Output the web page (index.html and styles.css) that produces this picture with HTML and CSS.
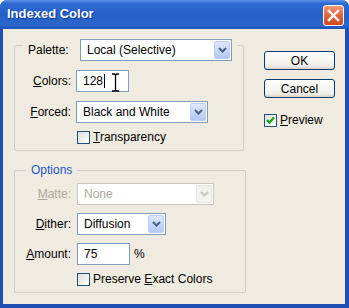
FILE: index.html
```html
<!DOCTYPE html>
<html lang="en">
<head>
    <meta charset="UTF-8">
    <title>Indexed Color</title>
    <link rel="stylesheet" href="styles.css">
</head>
<body>
    <div class="window">
        <div class="titlebar">
            <span class="title">Indexed Color</span>
            <span class="close">
                <svg width="13" height="13" viewBox="0 0 13 13"><path d="M2 2 L11 11 M11 2 L2 11" stroke="#fff" stroke-width="2.4" stroke-linecap="square"/></svg>
            </span>
        </div>
        <div class="body">
            <div class="main">
                <div class="group group-palette">
                    <div class="group-head">
                        <span class="head-label">Palette:</span>
                        <div class="combo combo-palette">
                            <span class="value">Local (Selective)</span>
                            <span class="drop"><svg width="9" height="6" viewBox="0 0 9 6"><path d="M1 1 L4.5 4.5 L8 1" fill="none" stroke="#4d6185" stroke-width="2"/></svg></span>
                        </div>
                    </div>
                    <div class="row first">
                        <span class="lbl"><u>C</u>olors:</span>
                        <div class="field field-colors">
                            <span class="value">128</span><span class="caret"></span>
                            <svg class="ibeam" width="9" height="19" viewBox="0 0 9 19"><path d="M1 1 H3.5 L4.5 2 L5.5 1 H8 M4.5 2 V17 M1 18 H3.5 L4.5 17 L5.5 18 H8" fill="none" stroke="#000" stroke-width="1.3"/></svg>
                        </div>
                    </div>
                    <div class="row">
                        <span class="lbl"><u>F</u>orced:</span>
                        <div class="combo combo-forced">
                            <span class="value">Black and White</span>
                            <span class="drop"><svg width="9" height="6" viewBox="0 0 9 6"><path d="M1 1 L4.5 4.5 L8 1" fill="none" stroke="#4d6185" stroke-width="2"/></svg></span>
                        </div>
                    </div>
                    <div class="check-row">
                        <span class="box"></span>
                        <span><u>T</u>ransparency</span>
                    </div>
                </div>

                <div class="group group-options">
                    <div class="legend">Options</div>
                    <div class="row matte">
                        <span class="lbl disabled"><u>M</u>atte:</span>
                        <div class="combo combo-matte disabled">
                            <span class="value">None</span>
                            <span class="drop"><svg width="9" height="6" viewBox="0 0 9 6"><path d="M1 1 L4.5 4.5 L8 1" fill="none" stroke="#c9c7ba" stroke-width="2"/></svg></span>
                        </div>
                    </div>
                    <div class="row">
                        <span class="lbl"><u>D</u>ither:</span>
                        <div class="combo combo-dither">
                            <span class="value">Diffusion</span>
                            <span class="drop"><svg width="9" height="6" viewBox="0 0 9 6"><path d="M1 1 L4.5 4.5 L8 1" fill="none" stroke="#4d6185" stroke-width="2"/></svg></span>
                        </div>
                    </div>
                    <div class="row">
                        <span class="lbl"><u>A</u>mount:</span>
                        <div class="field field-amount"><span class="value">75</span></div>
                        <span class="unit">%</span>
                    </div>
                    <div class="check-row">
                        <span class="box"></span>
                        <span>Preserve <u>E</u>xact Colors</span>
                    </div>
                </div>
            </div>

            <div class="side">
                <button class="btn">OK</button>
                <button class="btn">Cancel</button>
                <div class="check-row preview">
                    <span class="box">
                        <svg width="11" height="11" viewBox="0 0 11 11"><path d="M2 5 L4.5 7.5 L9 2.5" fill="none" stroke="#21a121" stroke-width="2.4"/></svg>
                    </span>
                    <span><u>P</u>review</span>
                </div>
            </div>
        </div>
    </div>
</body>
</html>
```

FILE: styles.css
```css
body {
    margin: 0;
    background: #ffffff;
    font-family: "Liberation Sans", Arial, sans-serif;
    font-size: 12px;
    color: #000;
}
.window {
    width: 349px;
    height: 308px;
    display: flex;
    flex-direction: column;
    background: #1f4fb3;
    border-radius: 7px 7px 0 0;
    overflow: hidden;
}
.titlebar {
    height: 29px;
    flex: none;
    display: flex;
    align-items: center;
    justify-content: space-between;
    padding: 0 5px 0 7px;
    background: linear-gradient(to bottom, #5b93e6 0%, #2f6ad3 12%, #2660c8 50%, #2a66cc 85%, #1e55bb 100%);
}
.title {
    color: #fff;
    font-weight: bold;
    font-size: 13px;
    text-shadow: 1px 1px 0 #0b3b98;
    margin-top: -2px;
}
.close {
    width: 19px;
    height: 19px;
    border: 1px solid #fff;
    border-radius: 3px;
    background: linear-gradient(to bottom, #f19a7b, #e2643c 50%, #cc4a22);
    display: flex;
    align-items: center;
    justify-content: center;
    margin-top: 2px;
}
.body {
    flex: 1;
    margin: 0 4px 4px 3px;
    background: #efebe0;
    display: flex;
}
.main {
    padding: 16px 0 0 11px;
}
.group {
    border: 1px solid #d0d0bf;
    border-radius: 2px;
}
.group-palette {
    width: 230px;
    box-sizing: border-box;
    padding-bottom: 6px;
}
.group-options {
    width: 232px;
    box-sizing: border-box;
    margin-top: 19px;
    padding-bottom: 6px;
}
.group-head {
    display: flex;
    align-items: center;
    width: fit-content;
    margin: -7px 0 0 8px;
    padding: 0 5px;
    background: #efebe0;
}
.head-label {
    width: 43px;
    margin-right: 9px;
}
.legend {
    width: fit-content;
    height: 14px;
    line-height: 14px;
    margin: -8px 0 0 11px;
    padding: 0 5px;
    background: #efebe0;
    color: #1f56cc;
}
.row {
    display: flex;
    align-items: center;
    margin-top: 8px;
}
.row.first {
    margin-top: 9px;
}
.group-palette .row {
    margin-top: 9px;
}
.row.matte {
    margin-top: 6px;
}
.lbl {
    width: 56px;
    margin-right: 5px;
    text-align: right;
}
.group-options .lbl {
    margin-right: 6px;
}
.lbl.disabled {
    color: #aca899;
}
.combo, .field {
    height: 22px;
    box-sizing: border-box;
    border: 1px solid #7f9db9;
    background: #fff;
    display: flex;
    align-items: center;
    position: relative;
}
.value {
    padding-left: 6px;
}
.combo .value {
    flex: 1;
}
.drop {
    width: 16px;
    align-self: stretch;
    margin: 1px;
    border-radius: 2px;
    border: 1px solid #bccdf5;
    box-sizing: border-box;
    background: linear-gradient(to bottom, #dfe8fd, #c2d4f8 60%, #b4c8f4);
    display: flex;
    align-items: center;
    justify-content: center;
}
.combo-palette { width: 152px; }
.combo-forced { width: 132px; }
.combo-matte { width: 137px; }
.combo-dither { width: 89px; }
.combo.disabled {
    border-color: #c9c7ba;
    color: #aca899;
}
.combo.disabled .drop {
    border-color: #e6e4dc;
    background: #f3f2ec;
}
.field-colors, .field-amount {
    width: 53px;
}
.caret {
    width: 1px;
    height: 14px;
    background: #000;
    margin-left: 1px;
}
.ibeam {
    position: absolute;
    left: 34px;
    top: 2px;
}
.unit {
    margin-left: 4px;
}
.check-row {
    display: flex;
    align-items: center;
    height: 14px;
    margin-top: 7px;
    padding-left: 62px;
}
.box {
    width: 13px;
    height: 13px;
    box-sizing: border-box;
    border: 1px solid #1c5180;
    background: linear-gradient(135deg, #dcdcd7, #ffffff);
    margin-right: 3px;
    display: flex;
    align-items: center;
    justify-content: center;
}
.side {
    margin-left: auto;
    padding: 22px 10px 0 0;
    display: flex;
    flex-direction: column;
}
.btn {
    width: 71px;
    height: 19px;
    padding: 0;
    font-family: "Liberation Sans", Arial, sans-serif;
    font-size: 12px;
    color: #000;
    border: 1px solid #003c74;
    border-radius: 3px;
    background: linear-gradient(to bottom, #ffffff, #f0efea 80%, #d8d2c6);
    margin-bottom: 9px;
}
.check-row.preview {
    padding-left: 0;
    margin-top: 6px;
}
```
